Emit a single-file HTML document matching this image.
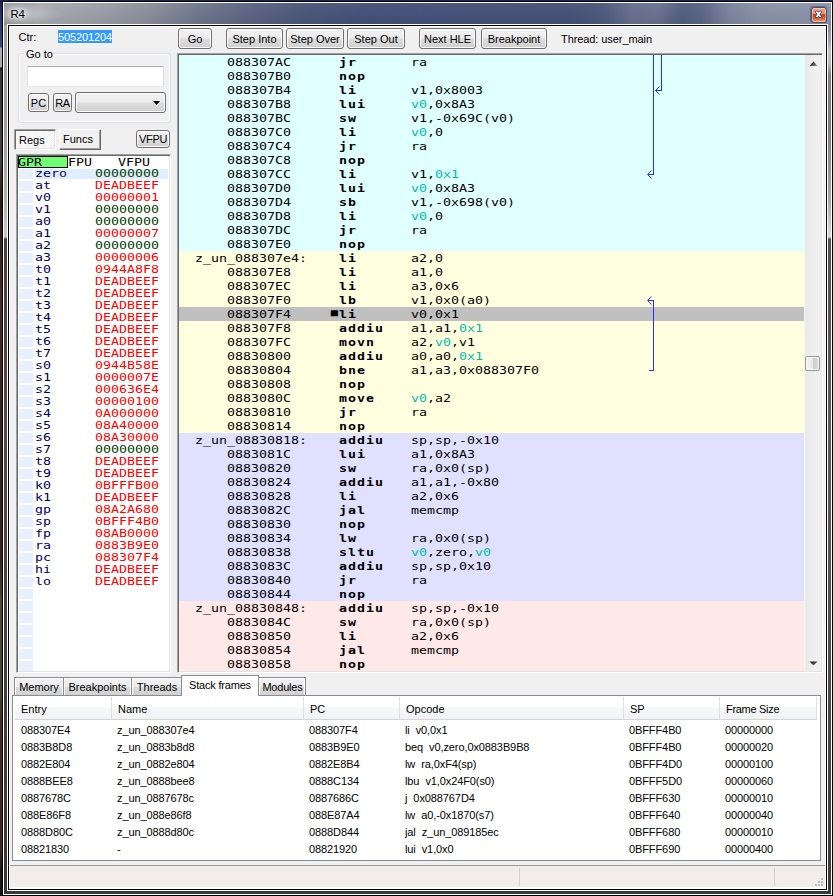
<!DOCTYPE html>
<html>
<head>
<meta charset="utf-8">
<title>R4</title>
<style>
html,body{margin:0;padding:0}
body{width:833px;height:896px;overflow:hidden;position:relative;background:#3a2620;font:11px/13px "Liberation Sans",sans-serif;color:#000}
div,span{box-sizing:border-box}
.abs{position:absolute}
/* desktop peeking around window */
#desk-top{left:0;top:0;width:833px;height:1px;background:#162560}
#desk-left{left:0;top:1px;width:2px;height:895px;background:linear-gradient(#1b2450 0,#2a3868 19px,#3a4a78 46px,#b0b0b8 47px,#a8a4b0 66px,#101010 67px,#3a3632 70px,#4a4038 160px,#2a1c16 200px,#4a2a1e 300px,#3a221a 420px,#3a221a 560px,#4a4a28 600px,#45452a 690px,#4a2a1e 720px,#42241a 850px,#181818 870px,#141414 895px)}
/* window frame */
#win{left:2px;top:1px;width:831px;height:895px;border:1px solid #000;background:#fff}
#glass-top{left:4px;top:3px;width:827px;height:22px;background:linear-gradient(100deg,#989aa2 0,#a9abb1 36px,#9c9fa8 96px,#8a8e9c 146px,#6e768c 196px,#5a6482 246px,#4b5678 296px,#44507a 356px,#45517a 560px,#4c577c 590px,#66708e 620px,#69738f 645px,#525d7e 670px,#5a6586 690px,#7a849f 715px,#8a92a8 745px,#8d95ab 827px)}
#glass-top:after{content:"";position:absolute;left:0;top:0;right:0;bottom:0;background:linear-gradient(rgba(255,255,255,.04),rgba(0,0,0,.06))}
#glass-left{left:4px;top:25px;width:3px;height:866px;background:linear-gradient(#a4a6ac 0,#9e9e9e 100px,#b0b0b0 175px,#c8c8c8 212px,#4a403c 214px,#564844 400px,#4a403c 600px,#3a3834 866px)}
#glass-right{left:828px;top:25px;width:3px;height:866px;background:linear-gradient(#8a92a8 0,#9aa0b0 15px,#c0c0c6 25px,#b8b8bc 38px,#858280 50px,#807c7a 100px,#a8a8a8 175px,#d8d8d8 212px,#55524e 214px,#605c58 400px,#54504c 600px,#3c3c3a 866px)}
#glass-bottom{left:4px;top:891px;width:827px;height:3px;background:#363a38}
#client{left:9px;top:26px;width:817px;height:863px;background:#f0f0f0;box-shadow:0 0 0 1px #000,0 0 0 2px #fff,inset 1px 1px 0 #fff,inset -1px 0 0 #fff}
#hl-top{left:7px;top:24px;width:821px;height:1px;background:#b9c0d3}
#title{left:10.5px;top:7px;font:11.5px/14px "Liberation Sans",sans-serif;letter-spacing:-0.3px;color:#000;text-shadow:0 0 4px #fff,0 0 6px #fff,0 0 8px #fff}
#glow{left:4px;top:4px;width:60px;height:20px;background:radial-gradient(ellipse at 30% 50%,rgba(255,255,255,.35),rgba(255,255,255,0) 70%)}
#close{left:811px;top:7px;width:16px;height:16px;border:1px solid #4a5068;border-radius:3px;background:linear-gradient(#f3b6a4 0,#eda08a 8%,#e8927a 42%,#c8441c 46%,#cc4c24 60%,#e27a54 85%,#f0a484 100%);box-shadow:inset 0 0 0 1px rgba(255,220,205,.55),-0.5px -0.5px 1px rgba(60,70,100,.55)}
#close svg{position:absolute;left:2.1px;top:2.15px}
/* common */
.btn{border:1px solid #707070;border-radius:3px;background:linear-gradient(#f2f2f2 0,#ebebeb 48%,#dddddd 52%,#cfcfcf 100%);box-shadow:inset 0 0 0 1px #fcfcfc;text-align:center;font:11px/13px "Liberation Sans",sans-serif;white-space:nowrap}
.btn span{position:relative;display:block}
.lbl{white-space:nowrap}
/* left top */
#sel{left:58px;top:30px;width:54px;height:13px;padding-top:1px;letter-spacing:-0.12px;background:#3399ff;color:#fff;white-space:nowrap}
#grp{left:18px;top:53px;width:153px;height:70px;border:1px solid #d5dfe5;border-radius:3px;box-shadow:inset 0 0 0 1px #fff}
#grpl{left:24px;top:48px;width:29px;height:13px;background:#f0f0f0;padding-left:2px}
#edit{left:27px;top:66px;width:137px;height:21px;background:#fff;border:1px solid #e3e9ef;border-top-color:#abadb3;border-left-color:#e2e3ea;border-right-color:#dbdfe6;border-radius:1px}
#combo svg{position:absolute;right:5px;top:8px}
/* regs tabs */
#tregs{left:14px;top:129px;width:42px;height:21px;background:repeating-conic-gradient(#fff 0 25%,#f0f0f0 0 50%) 0 0/2px 2px;border-top:1px solid #a0a0a0;border-left:1px solid #a0a0a0;border-right:1px solid #fff;border-bottom:1px solid #fff;box-shadow:inset 1px 1px 0 #696969,inset -1px -1px 0 #e3e3e3}
#tfuncs{left:59px;top:129px;width:42px;height:21px;background:#f0f0f0;border-top:1px solid #fff;border-left:1px solid #fff;border-right:1px solid #696969;border-bottom:1px solid #696969;box-shadow:inset -1px -1px 0 #a0a0a0}
.sunk{border-top:1px solid #a0a0a0;border-left:1px solid #a0a0a0;border-right:1px solid #fff;border-bottom:1px solid #fff;box-shadow:inset 1px 1px 0 #696969,inset -1px -1px 0 #e3e3e3}
/* register list */
#regbox{left:16px;top:154px;width:155px;height:519px;background:#fff}
#regcells{left:19px;top:169px;width:14px;height:502px;background:repeating-linear-gradient(#e8efff 0,#e8efff 10px,#fff 10px,#fff 12px)}
#regsel{left:35px;top:169px;width:133px;height:10px;background:#e0eeff}
#gpr{left:18px;top:156px;width:50px;height:12px;background:#70ff70;border:1px solid #000}
.mono{font:11px/14px "DejaVu Sans Mono","Liberation Mono",monospace;transform:scaleX(1.2078);transform-origin:0 0}
#reghdr{left:18px;top:157px;line-height:12px;color:#000}
#regtxt{left:35px;top:168px;color:#000060}
#regtxt .rl{height:12px;line-height:12px;white-space:pre}
#reghdr{white-space:pre}
#regtxt .c{color:#ff0000;margin-left:3.31px}
#regtxt .z{color:#004000;margin-left:3.31px}
/* disasm */
#disbox{left:177px;top:53px;width:646px;height:620px;background:#f0f0f0}
#disbg{left:179px;top:55px;width:625px;height:616px;background:linear-gradient(#e0ffff 0,#e0ffff 196px,#ffffe0 196px,#ffffe0 378px,#e0e0ff 378px,#e0e0ff 546px,#ffe8e8 546px,#ffe8e8 616px)}
#discur{left:179px;top:307px;width:625px;height:14px;background:#c0c0c0}
#distxt{left:179px;top:56px;color:#000}
#distxt .dl{height:14px;line-height:14px;white-space:pre}
#distxt i{font-style:normal;color:#00bbaa}
#distxt b{display:inline-block;width:59.61px;letter-spacing:0.828px}
#distxt .mk{display:inline-block;width:6.6234px;font-size:10px;line-height:8px;vertical-align:2px;overflow:visible;text-indent:-0.3px}
#sb{left:804px;top:55px;width:17px;height:616px;background:linear-gradient(90deg,#f7f7f7 0,#e9e9e9 2px,#ececec 6px,#f0f0f0 12px,#f0f0f0 100%)}
#thumb{left:805px;top:356px;width:15px;height:15px;border:1px solid #979797;border-radius:2px;background:linear-gradient(90deg,#f5f5f5 0,#e8e8ea 50%,#cfcfd3 55%,#dadadd 100%);box-shadow:inset 0 0 0 1px rgba(255,255,255,.8)}
/* bottom tabs */
.tab{top:677px;height:19px;border:1px solid #898c95;border-bottom:none;background:linear-gradient(#f2f2f2 0,#ebebeb 48%,#dddddd 52%,#cfcfcf 100%);box-shadow:inset 1px 1px 0 #fcfcfc,inset -1px 0 0 #fcfcfc;text-align:center;white-space:nowrap;padding-top:3px}
#tabsel{left:181px;top:675px;width:78px;height:20px;border:1px solid #898c95;border-bottom:none;background:#fff;text-align:center;white-space:nowrap;padding-top:3px;letter-spacing:-0.2px}
#tabcov{left:182px;top:695px;width:76px;height:1px;background:#fff}
#pane{left:12px;top:695px;width:809px;height:166px;border:1px solid #898c95;background:#fff}
#lvhdr{left:15px;top:697px;width:802px;height:23px;background:linear-gradient(#fff 0,#fff 45%,#f7f8fa 46%,#f1f2f4 100%);border-bottom:1px solid #d5d5d5}
.hc{top:697px;height:22px;border-right:1px solid #dedfe1;padding:6px 0 0 6px;white-space:nowrap}
#lv{left:15px;top:722px;width:802px}
.fr{position:relative;height:17px;line-height:17px;white-space:nowrap;letter-spacing:-0.1px}
.fr span{position:absolute;top:0}
.fr .sp{position:static;display:inline-block;width:6px}
.c0{left:6px}.c1{left:102px}.c2{left:294px}.c3{left:390px}.c4{left:614px}.c5{left:710px}
/* status bar */
#stline{left:10px;top:865px;width:815px;height:1px;background:#9a9a9a}
#status{left:10px;top:866px;width:814px;height:21px;background:#f0edec}
#stbot{left:9px;top:887px;width:817px;height:2px;background:#fff}
.sdiv{top:868px;width:1px;height:18px;background:#d2d0d0}
</style>
</head>
<body>
<div class="abs" id="desk-top"></div>
<div class="abs" id="desk-left"></div>
<div class="abs" id="win"></div>
<div class="abs" id="glass-top"></div>
<div class="abs" id="glass-left"></div>
<div class="abs" id="glass-right"></div>
<div class="abs" id="glass-bottom"></div>
<div class="abs" id="hl-top"></div>
<div class="abs" id="glow"></div>
<div class="abs" id="title">R4</div>
<div class="abs" id="close"><svg width="9" height="9" viewBox="-1.5 -1.5 9 9"><path d="M0 0h2l1 1.3L4 0h2L4 2.75 6 5.5H4L3 4.2 2 5.5H0l2-2.75z" fill="#fff" stroke="#3c465e" stroke-width="1.3" stroke-linejoin="round" paint-order="stroke"/></svg></div>
<div class="abs" id="client"></div>

<!-- top-left controls -->
<div class="abs lbl" style="left:18.5px;top:31px">Ctr:</div>
<div class="abs" id="sel">505201204</div>
<div class="abs" id="grp"></div>
<div class="abs lbl" id="grpl">Go to</div>
<div class="abs" id="edit"></div>
<div class="abs btn" style="left:28px;top:93px;width:21px;height:19px;padding-top:3px">PC</div>
<div class="abs btn" style="left:53px;top:93px;width:19px;height:19px;padding-top:3px;letter-spacing:-0.3px">RA</div>
<div class="abs btn" id="combo" style="left:75px;top:92px;width:91px;height:21px"><svg width="7" height="4" viewBox="0 0 7 4"><path d="M0 0h7L3.5 4z" fill="#000"/></svg></div>

<!-- toolbar -->
<div class="abs btn" style="left:178px;top:28px;width:34px;height:21px;padding-top:4px">Go</div>
<div class="abs btn" style="left:226px;top:28px;width:57px;height:21px;padding-top:4px">Step Into</div>
<div class="abs btn" style="left:286px;top:28px;width:58px;height:21px;padding-top:4px">Step Over</div>
<div class="abs btn" style="left:347px;top:28px;width:58px;height:21px;padding-top:4px">Step Out</div>
<div class="abs btn" style="left:419px;top:28px;width:57px;height:21px;padding-top:4px">Next HLE</div>
<div class="abs btn" style="left:481px;top:28px;width:66px;height:21px;padding-top:4px">Breakpoint</div>
<div class="abs lbl" style="left:561px;top:33px;letter-spacing:-0.08px">Thread: user_main</div>

<!-- Regs / Funcs tabs -->
<div class="abs lbl" id="tregs"><span class="abs" style="left:4px;top:4px">Regs</span></div>
<div class="abs lbl" id="tfuncs"><span class="abs" style="left:3px;top:3px">Funcs</span></div>
<div class="abs btn" style="left:136px;top:130px;width:34px;height:18px;padding-top:2px;letter-spacing:-0.3px">VFPU</div>

<!-- register list -->
<div class="abs sunk" id="regbox"></div>
<div class="abs" id="regcells"></div>
<div class="abs" id="regsel"></div>
<div class="abs" id="gpr"></div>
<div class="abs mono" id="reghdr">GPR   <span style="margin-left:1.66px">FPU</span>   <span style="margin-left:1.66px">VFPU</span></div>
<div class="abs mono" id="regtxt">
<div class="rl">zero   <span class="z">00000000</span></div>
<div class="rl">at     <span class="c">DEADBEEF</span></div>
<div class="rl">v0     <span class="c">00000001</span></div>
<div class="rl">v1     <span class="z">00000000</span></div>
<div class="rl">a0     <span class="z">00000000</span></div>
<div class="rl">a1     <span class="c">00000007</span></div>
<div class="rl">a2     <span class="z">00000000</span></div>
<div class="rl">a3     <span class="c">00000006</span></div>
<div class="rl">t0     <span class="c">0944A8F8</span></div>
<div class="rl">t1     <span class="c">DEADBEEF</span></div>
<div class="rl">t2     <span class="c">DEADBEEF</span></div>
<div class="rl">t3     <span class="c">DEADBEEF</span></div>
<div class="rl">t4     <span class="c">DEADBEEF</span></div>
<div class="rl">t5     <span class="c">DEADBEEF</span></div>
<div class="rl">t6     <span class="c">DEADBEEF</span></div>
<div class="rl">t7     <span class="c">DEADBEEF</span></div>
<div class="rl">s0     <span class="c">0944B58E</span></div>
<div class="rl">s1     <span class="c">0000007E</span></div>
<div class="rl">s2     <span class="c">000636E4</span></div>
<div class="rl">s3     <span class="c">00000100</span></div>
<div class="rl">s4     <span class="c">0A000000</span></div>
<div class="rl">s5     <span class="c">08A40000</span></div>
<div class="rl">s6     <span class="c">08A30000</span></div>
<div class="rl">s7     <span class="z">00000000</span></div>
<div class="rl">t8     <span class="c">DEADBEEF</span></div>
<div class="rl">t9     <span class="c">DEADBEEF</span></div>
<div class="rl">k0     <span class="c">0BFFFB00</span></div>
<div class="rl">k1     <span class="c">DEADBEEF</span></div>
<div class="rl">gp     <span class="c">08A2A680</span></div>
<div class="rl">sp     <span class="c">0BFFF4B0</span></div>
<div class="rl">fp     <span class="c">08AB0000</span></div>
<div class="rl">ra     <span class="c">0883B9E0</span></div>
<div class="rl">pc     <span class="c">088307F4</span></div>
<div class="rl">hi     <span class="c">DEADBEEF</span></div>
<div class="rl">lo     <span class="c">DEADBEEF</span></div>
</div>

<!-- disassembly -->
<div class="abs sunk" id="disbox"></div>
<div class="abs" id="disbg"></div>
<div class="abs" id="discur"></div>
<svg class="abs" style="left:179px;top:55px" width="625" height="616" viewBox="0 0 625 616" fill="none" stroke="#2030ff" stroke-width="1" shape-rendering="crispEdges">
<path d="M474.5 0V119.5H468.5"/>
<path d="M482.5 0V35.5H476.5"/>
<path d="M469.5 315.5H474.5V245.5H468.5"/>
<g shape-rendering="auto"><path d="M472.5 115.5l-4 4 4 4M480.5 31.5l-4 4 4 4M472.5 241.5l-4 4 4 4"/></g>
</svg>
<div class="abs mono" id="distxt">
<div class="dl">      088307AC      <b>jr</b>ra</div>
<div class="dl">      088307B0      <b>nop</b></div>
<div class="dl">      088307B4      <b>li</b>v1,0x8003</div>
<div class="dl">      088307B8      <b>lui</b><i>v0</i>,0x8A3</div>
<div class="dl">      088307BC      <b>sw</b>v1,-0x69C(v0)</div>
<div class="dl">      088307C0      <b>li</b><i>v0</i>,0</div>
<div class="dl">      088307C4      <b>jr</b>ra</div>
<div class="dl">      088307C8      <b>nop</b></div>
<div class="dl">      088307CC      <b>li</b>v1,<i>0x1</i></div>
<div class="dl">      088307D0      <b>lui</b><i>v0</i>,0x8A3</div>
<div class="dl">      088307D4      <b>sb</b>v1,-0x698(v0)</div>
<div class="dl">      088307D8      <b>li</b><i>v0</i>,0</div>
<div class="dl">      088307DC      <b>jr</b>ra</div>
<div class="dl">      088307E0      <b>nop</b></div>
<div class="dl">  z_un_088307e4:    <b>li</b>a2,0</div>
<div class="dl">      088307E8      <b>li</b>a1,0</div>
<div class="dl">      088307EC      <b>li</b>a3,0x6</div>
<div class="dl">      088307F0      <b>lb</b>v1,0x0(a0)</div>
<div class="dl">      088307F4     <span class="mk">■</span><b>li</b>v0,0x1</div>
<div class="dl">      088307F8      <b>addiu</b>a1,a1,<i>0x1</i></div>
<div class="dl">      088307FC      <b>movn</b>a2,<i>v0</i>,v1</div>
<div class="dl">      08830800      <b>addiu</b>a0,a0,<i>0x1</i></div>
<div class="dl">      08830804      <b>bne</b>a1,a3,0x088307F0</div>
<div class="dl">      08830808      <b>nop</b></div>
<div class="dl">      0883080C      <b>move</b><i>v0</i>,a2</div>
<div class="dl">      08830810      <b>jr</b>ra</div>
<div class="dl">      08830814      <b>nop</b></div>
<div class="dl">  z_un_08830818:    <b>addiu</b>sp,sp,-0x10</div>
<div class="dl">      0883081C      <b>lui</b>a1,0x8A3</div>
<div class="dl">      08830820      <b>sw</b>ra,0x0(sp)</div>
<div class="dl">      08830824      <b>addiu</b>a1,a1,-0x80</div>
<div class="dl">      08830828      <b>li</b>a2,0x6</div>
<div class="dl">      0883082C      <b>jal</b>memcmp</div>
<div class="dl">      08830830      <b>nop</b></div>
<div class="dl">      08830834      <b>lw</b>ra,0x0(sp)</div>
<div class="dl">      08830838      <b>sltu</b><i>v0</i>,zero,<i>v0</i></div>
<div class="dl">      0883083C      <b>addiu</b>sp,sp,0x10</div>
<div class="dl">      08830840      <b>jr</b>ra</div>
<div class="dl">      08830844      <b>nop</b></div>
<div class="dl">  z_un_08830848:    <b>addiu</b>sp,sp,-0x10</div>
<div class="dl">      0883084C      <b>sw</b>ra,0x0(sp)</div>
<div class="dl">      08830850      <b>li</b>a2,0x6</div>
<div class="dl">      08830854      <b>jal</b>memcmp</div>
<div class="dl">      08830858      <b>nop</b></div>
</div>
<div class="abs" id="sb"></div>
<svg class="abs" style="left:809px;top:61px" width="9" height="5" viewBox="0 0 9 5"><defs><linearGradient id="ag" x1="0" y1="0" x2="1" y2="1"><stop offset="0.35" stop-color="#2c2c2c"/><stop offset="1" stop-color="#a0a0a0"/></linearGradient></defs><path d="M0.5 5L4.5 0.6 8.5 5z" fill="url(#ag)"/></svg>
<svg class="abs" style="left:809px;top:661px" width="9" height="5" viewBox="0 0 9 5"><path d="M0.5 0.4h8L4.5 4.6z" fill="url(#ag)"/></svg>
<div class="abs" id="thumb"></div>

<!-- bottom tabs -->
<div class="abs tab" style="left:14px;width:50px">Memory</div>
<div class="abs tab" style="left:63px;width:69px">Breakpoints</div>
<div class="abs tab" style="left:131px;width:52px">Threads</div>
<div class="abs tab" style="left:258px;width:48px;letter-spacing:-0.2px;padding-left:1px">Modules</div>
<div class="abs" id="pane"></div>
<div class="abs" id="tabsel">Stack frames</div>
<div class="abs" id="tabcov"></div>
<div class="abs" id="lvhdr"></div>
<div class="abs hc" style="left:15px;width:97px">Entry</div>
<div class="abs hc" style="left:112px;width:192px">Name</div>
<div class="abs hc" style="left:304px;width:96px">PC</div>
<div class="abs hc" style="left:400px;width:224px">Opcode</div>
<div class="abs hc" style="left:624px;width:96px">SP</div>
<div class="abs hc" style="left:720px;width:97px;letter-spacing:-0.3px">Frame Size</div>
<div class="abs" id="lv">
<div class="fr"><span class="c0">088307E4</span><span class="c1">z_un_088307e4</span><span class="c2">088307F4</span><span class="c3">li<span class="sp"> </span>v0,0x1</span><span class="c4">0BFFF4B0</span><span class="c5">00000000</span></div>
<div class="fr"><span class="c0">0883B8D8</span><span class="c1">z_un_0883b8d8</span><span class="c2">0883B9E0</span><span class="c3">beq<span class="sp"> </span>v0,zero,0x0883B9B8</span><span class="c4">0BFFF4B0</span><span class="c5">00000020</span></div>
<div class="fr"><span class="c0">0882E804</span><span class="c1">z_un_0882e804</span><span class="c2">0882E8B4</span><span class="c3">lw<span class="sp"> </span>ra,0xF4(sp)</span><span class="c4">0BFFF4D0</span><span class="c5">00000100</span></div>
<div class="fr"><span class="c0">0888BEE8</span><span class="c1">z_un_0888bee8</span><span class="c2">0888C134</span><span class="c3">lbu<span class="sp"> </span>v1,0x24F0(s0)</span><span class="c4">0BFFF5D0</span><span class="c5">00000060</span></div>
<div class="fr"><span class="c0">0887678C</span><span class="c1">z_un_0887678c</span><span class="c2">0887686C</span><span class="c3">j<span class="sp"> </span>0x088767D4</span><span class="c4">0BFFF630</span><span class="c5">00000010</span></div>
<div class="fr"><span class="c0">088E86F8</span><span class="c1">z_un_088e86f8</span><span class="c2">088E87A4</span><span class="c3">lw<span class="sp"> </span>a0,-0x1870(s7)</span><span class="c4">0BFFF640</span><span class="c5">00000040</span></div>
<div class="fr"><span class="c0">0888D80C</span><span class="c1">z_un_0888d80c</span><span class="c2">0888D844</span><span class="c3">jal<span class="sp"> </span>z_un_089185ec</span><span class="c4">0BFFF680</span><span class="c5">00000010</span></div>
<div class="fr"><span class="c0">08821830</span><span class="c1">-</span><span class="c2">08821920</span><span class="c3">lui<span class="sp"> </span>v1,0x0</span><span class="c4">0BFFF690</span><span class="c5">00000400</span></div>
</div>

<!-- status bar -->
<div class="abs" id="stline"></div>
<div class="abs" id="status"></div>
<div class="abs" id="stbot"></div>
<div class="abs sdiv" style="left:519px"></div>
<div class="abs sdiv" style="left:774px"></div>
<svg class="abs" style="left:813px;top:877px" width="12" height="12" viewBox="0 0 12 12"><g fill="#bcbcbc"><rect x="8" y="1" width="2" height="2"/><rect x="5" y="4" width="2" height="2"/><rect x="8" y="4" width="2" height="2"/><rect x="2" y="7" width="2" height="2"/><rect x="5" y="7" width="2" height="2"/><rect x="8" y="7" width="2" height="2"/></g></svg>
</body>
</html>
